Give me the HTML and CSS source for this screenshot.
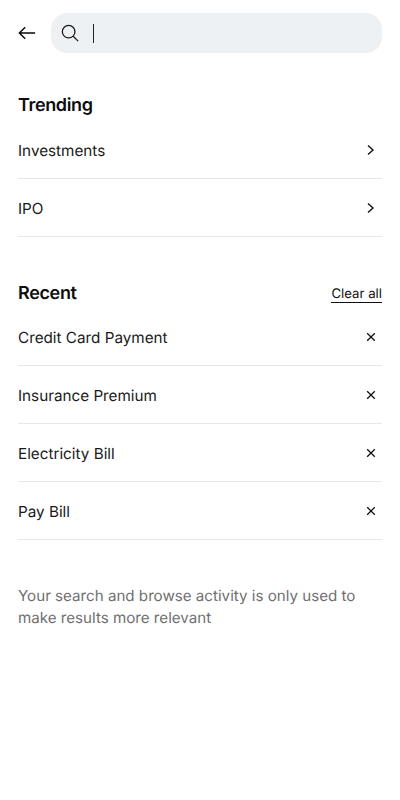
FILE: index.html
```html
<!DOCTYPE html>
<html lang="en">
<head>
<meta charset="utf-8">
<title>Search</title>
<link rel="stylesheet" href="styles.css">
</head>
<body>
<header class="top">
  <svg class="back" width="20" height="20" viewBox="0 0 20 20" fill="none"><path d="M19 10H1.500M8 3.500 1.500 10 8 16.500" stroke="#0a0a0a" stroke-width="1.600"/></svg>
  <div class="search">
    <svg class="glass" width="18" height="18" viewBox="0 0 20 20" fill="none"><circle cx="8.500" cy="8.500" r="7" stroke="#1a1a1a" stroke-width="1.400"/><path d="M13.600 13.600 19 19" stroke="#1a1a1a" stroke-width="1.400"/></svg>
    <span class="caret"></span>
  </div>
</header>
<section class="trending">
  <h2 class="title">Trending</h2>
  <ul class="list">
    <li class="row"><span class="label">Investments</span><svg class="chev" width="8" height="12" viewBox="0 0 8 12" fill="none"><path d="M1 1.500l5 4.500-5 4.500" stroke="#111" stroke-width="1.400"/></svg></li>
    <li class="row"><span class="label">IPO</span><svg class="chev" width="8" height="12" viewBox="0 0 8 12" fill="none"><path d="M1 1.500l5 4.500-5 4.500" stroke="#111" stroke-width="1.400"/></svg></li>
  </ul>
</section>
<section class="recent">
  <div class="head"><h2 class="title">Recent</h2><a class="clear">Clear all</a></div>
  <ul class="list">
    <li class="row"><span class="label">Credit Card Payment</span><svg class="x" width="10" height="10" viewBox="0 0 10 10" fill="none"><path d="M1.200 1.200l7.600 7.600M8.800 1.200 1.200 8.800" stroke="#111" stroke-width="1.300"/></svg></li>
    <li class="row"><span class="label">Insurance Premium</span><svg class="x" width="10" height="10" viewBox="0 0 10 10" fill="none"><path d="M1.200 1.200l7.600 7.600M8.800 1.200 1.200 8.800" stroke="#111" stroke-width="1.300"/></svg></li>
    <li class="row"><span class="label">Electricity Bill</span><svg class="x" width="10" height="10" viewBox="0 0 10 10" fill="none"><path d="M1.200 1.200l7.600 7.600M8.800 1.200 1.200 8.800" stroke="#111" stroke-width="1.300"/></svg></li>
    <li class="row"><span class="label">Pay Bill</span><svg class="x" width="10" height="10" viewBox="0 0 10 10" fill="none"><path d="M1.200 1.200l7.600 7.600M8.800 1.200 1.200 8.800" stroke="#111" stroke-width="1.300"/></svg></li>
  </ul>
</section>
<p class="note">Your search and browse activity is only used to make results more relevant</p>
</body>
</html>
```
FILE: styles.css
```css
* { box-sizing: border-box; }
html, body { margin: 0; padding: 0; }
body { width: 400px; height: 800px; background: #fff; color: #111; font-family: Inter, sans-serif; text-rendering: geometricPrecision; padding: 13px 18px 0; overflow: hidden; }
.top { display: flex; align-items: center; gap: 15px; height: 40px; }
.back { flex: none; width: 18px; height: 18px; }
.search { flex: 1; height: 40px; background: #eef1f4; border-radius: 16px; display: flex; align-items: center; padding-left: 10px; gap: 14px; }
.glass { flex: none; }
.caret { width: 1.300px; height: 19px; background: #222; }
.trending { margin-top: 41px; }
.title { margin: 0; font-size: 18px; line-height: 24px; font-weight: 600; letter-spacing: -0.35px; color: #0d0d0d; }
.list { list-style: none; margin: 0; padding: 0; }
.row { height: 58px; display: flex; justify-content: space-between; align-items: center; font-size: 15.25px; color: #1a1a1a; border-bottom: 1px solid #e8e8e8; padding-right: 6px; }
.label { margin-top: 1.500px; }
.chev { margin-right: 1px; }
.trending .list { margin-top: 3px; }
.recent { margin-top: 45px; }
.head { display: flex; justify-content: space-between; align-items: center; }
.clear { font-size: 13.2px; line-height: 16px; color: #111; border-bottom: 1.500px solid #111; }
.recent .list { margin-top: 2px; }
.note { margin: 45px 0 0; font-size: 15.15px; line-height: 22px; color: #6f6f6f; }
```
